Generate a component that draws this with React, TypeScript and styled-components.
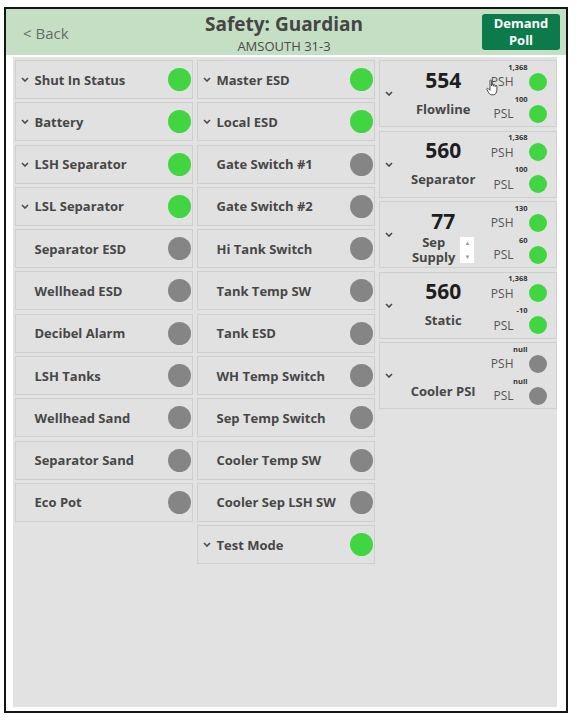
import React from 'react'
import styled, { createGlobalStyle } from 'styled-components'

const GlobalStyle = createGlobalStyle`
  body {
    margin: 0;
    background: #ffffff;
    font-family: 'Open Sans', 'Noto Sans', sans-serif;
  }
`

const Frame = styled.div`
  margin: 7px 0 0 4px;
  width: 564px;
  height: 706px;
  box-sizing: border-box;
  border: 2px solid #151515;
  background: #ffffff;
  display: flex;
  flex-direction: column;
`

const Header = styled.header`
  height: 46px;
  flex: none;
  box-sizing: border-box;
  padding: 0 6px 0 17px;
  background: #c5dfc4;
  display: grid;
  grid-template-columns: 148px 226px 1fr 78px;
  align-items: center;
`

const Back = styled.div`
  font-size: 15px;
  color: #6a6a6a;
  padding-top: 2px;
`

const TitleBlock = styled.div`
  text-align: center;
  align-self: start;
  padding-top: 3px;
  white-space: nowrap;
`

const Title = styled.div`
  font-size: 19px;
  line-height: 25px;
  font-weight: 700;
  color: #454545;
`

const Subtitle = styled.div`
  font-size: 13px;
  line-height: 18px;
  color: #4a4a4a;
`

const PollButton = styled.button`
  grid-column: 4;
  width: 78px;
  height: 36px;
  border: none;
  border-radius: 3px;
  background: #0d7a4b;
  color: #ffffff;
  font-family: inherit;
  font-size: 13px;
  line-height: 17px;
  font-weight: 700;
  padding: 0;
  display: flex;
  flex-direction: column;
  align-items: center;
  justify-content: center;
`

const Panel = styled.main`
  flex: 1;
  margin: 2px 9px 4px 7px;
  padding: 3px 0 3px 2px;
  background: #e2e2e2;
  display: grid;
  grid-template-columns: repeat(3, 178px);
  column-gap: 4px;
  align-items: start;
`

const Column = styled.div<{ $gap: number }>`
  display: flex;
  flex-direction: column;
  gap: ${(p) => p.$gap}px;
`

const Row = styled.div`
  height: 39px;
  box-sizing: border-box;
  border: 1.5px solid #cfcfcf;
  background: #e1e1e1;
  display: flex;
  align-items: center;
  padding: 0 1px 0 4.5px;
`

const ChevBox = styled.span`
  width: 14px;
  flex: none;
  display: flex;
  align-items: center;
`

const RowLabel = styled.span`
  flex: 1;
  font-size: 13px;
  font-weight: 700;
  color: #474747;
  white-space: nowrap;
`

const Dot = styled.span<{ $on: boolean; $size: number }>`
  width: ${(p) => p.$size}px;
  height: ${(p) => p.$size}px;
  flex: none;
  border-radius: 50%;
  background: ${(p) => (p.$on ? '#41d541' : '#858585')};
`

const Gauge = styled.div`
  position: relative;
  height: 67px;
  box-sizing: border-box;
  border: 1.5px solid #cfcfcf;
  background: #e1e1e1;
  display: flex;
  padding: 0 9.5px 0 4.5px;
`

const GaugeMain = styled.div`
  flex: 1;
  display: flex;
  flex-direction: column;
  align-items: center;
  padding: 5.5px 3px 0 0;
`

const Reading = styled.div`
  height: 26px;
  font-size: 21px;
  line-height: 26px;
  font-weight: 700;
  color: #1e1e1e;
`

const NameRow = styled.div`
  flex: 1;
  display: flex;
  align-items: center;
  gap: 5px;
`

const Name = styled.div`
  font-size: 13px;
  line-height: 15px;
  font-weight: 700;
  color: #474747;
  text-align: center;
  white-space: pre-line;
`

const Spinner = styled.div`
  width: 14px;
  height: 26px;
  background: #ffffff;
  display: flex;
  flex-direction: column;
  justify-content: space-between;
  align-items: center;
  font-size: 6px;
  line-height: 12px;
  color: #9a9a9a;
`

const Limits = styled.div`
  display: flex;
  flex-direction: column;
  padding-top: 1.5px;
`

const LimitBlock = styled.div<{ $top: number }>`
  margin-top: ${(p) => p.$top}px;
  display: flex;
  flex-direction: column;
  align-items: flex-end;
`

const LimitValue = styled.div`
  height: 9px;
  font-size: 7.5px;
  line-height: 9px;
  font-weight: 700;
  color: #333333;
  margin-right: 19px;
`

const LimitRow = styled.div`
  height: 20px;
  display: flex;
  align-items: center;
  gap: 15px;
`

const LimitLabel = styled.span`
  font-size: 12px;
  color: #555555;
`

const Pointer = styled.svg`
  position: absolute;
  left: 106px;
  top: 18px;
`

const Chevron = () => (
  <svg width="8" height="5" viewBox="0 0 8 5">
    <polyline points="1,1 4,4 7,1" fill="none" stroke="#4a4a4a" strokeWidth="1.6" />
  </svg>
)

const Hand = () => (
  <Pointer width="13" height="17" viewBox="0 0 13 17">
    <path
      d="M4 1.5 C4 0.8 5.6 0.8 5.6 1.5 L5.6 7 L5.8 5.6 C5.8 4.9 7.3 4.9 7.3 5.6 L7.4 7.2 L7.6 6.2 C7.6 5.5 9.1 5.5 9.1 6.2 L9.2 7.6 L9.4 7 C9.4 6.3 10.9 6.3 10.9 7 L10.9 11 C10.9 13.6 9.6 15.8 7.2 15.8 L5.8 15.8 C4.2 15.8 3.3 14.8 2.4 13.3 L0.9 10.4 C0.5 9.6 1.6 8.9 2.3 9.6 L4 11.3 Z"
      fill="#ffffff"
      stroke="#3a3a3a"
      strokeWidth="0.9"
      strokeLinejoin="round"
    />
  </Pointer>
)

type Item = { name: string; on: boolean; open?: boolean }

const left: Item[] = [
  { name: 'Shut In Status', on: true, open: true },
  { name: 'Battery', on: true, open: true },
  { name: 'LSH Separator', on: true, open: true },
  { name: 'LSL Separator', on: true, open: true },
  { name: 'Separator ESD', on: false },
  { name: 'Wellhead ESD', on: false },
  { name: 'Decibel Alarm', on: false },
  { name: 'LSH Tanks', on: false },
  { name: 'Wellhead Sand', on: false },
  { name: 'Separator Sand', on: false },
  { name: 'Eco Pot', on: false },
]

const middle: Item[] = [
  { name: 'Master ESD', on: true, open: true },
  { name: 'Local ESD', on: true, open: true },
  { name: 'Gate Switch #1', on: false },
  { name: 'Gate Switch #2', on: false },
  { name: 'Hi Tank Switch', on: false },
  { name: 'Tank Temp SW', on: false },
  { name: 'Tank ESD', on: false },
  { name: 'WH Temp Switch', on: false },
  { name: 'Sep Temp Switch', on: false },
  { name: 'Cooler Temp SW', on: false },
  { name: 'Cooler Sep LSH SW', on: false },
  { name: 'Test Mode', on: true, open: true },
]

type Pressure = {
  name: string
  value?: string
  high: string
  low: string
  on: boolean
  spinner?: boolean
  hovered?: boolean
}

const pressures: Pressure[] = [
  { name: 'Flowline', value: '554', high: '1,368', low: '100', on: true, hovered: true },
  { name: 'Separator', value: '560', high: '1,368', low: '100', on: true },
  { name: 'Sep\nSupply', value: '77', high: '130', low: '60', on: true, spinner: true },
  { name: 'Static', value: '560', high: '1,368', low: '-10', on: true },
  { name: 'Cooler PSI', high: 'null', low: 'null', on: false },
]

const SwitchRow = ({ item }: { item: Item }) => (
  <Row>
    <ChevBox>{item.open && <Chevron />}</ChevBox>
    <RowLabel>{item.name}</RowLabel>
    <Dot $on={item.on} $size={23} />
  </Row>
)

const PressureCard = ({ p }: { p: Pressure }) => (
  <Gauge>
    <ChevBox>
      <Chevron />
    </ChevBox>
    <GaugeMain>
      <Reading>{p.value}</Reading>
      <NameRow>
        <Name>{p.name}</Name>
        {p.spinner && (
          <Spinner>
            <span>▲</span>
            <span>▼</span>
          </Spinner>
        )}
      </NameRow>
    </GaugeMain>
    <Limits>
      <LimitBlock $top={0}>
        <LimitValue>{p.high}</LimitValue>
        <LimitRow>
          <LimitLabel>PSH</LimitLabel>
          <Dot $on={p.on} $size={18} />
        </LimitRow>
      </LimitBlock>
      <LimitBlock $top={3}>
        <LimitValue>{p.low}</LimitValue>
        <LimitRow>
          <LimitLabel>PSL</LimitLabel>
          <Dot $on={p.on} $size={18} />
        </LimitRow>
      </LimitBlock>
    </Limits>
    {p.hovered && <Hand />}
  </Gauge>
)

const App = (): JSX.Element => {
  return (
    <>
      <GlobalStyle />
      <Frame>
        <Header>
          <Back>&lt; Back</Back>
          <TitleBlock>
            <Title>Safety: Guardian</Title>
            <Subtitle>AMSOUTH 31-3</Subtitle>
          </TitleBlock>
          <PollButton>
            <span>Demand</span>
            <span>Poll</span>
          </PollButton>
        </Header>
        <Panel>
          <Column $gap={3.3}>
            {left.map((item) => (
              <SwitchRow key={item.name} item={item} />
            ))}
          </Column>
          <Column $gap={3.3}>
            {middle.map((item) => (
              <SwitchRow key={item.name} item={item} />
            ))}
          </Column>
          <Column $gap={3.5}>
            {pressures.map((p) => (
              <PressureCard key={p.name} p={p} />
            ))}
          </Column>
        </Panel>
      </Frame>
    </>
  )
}

export default App
